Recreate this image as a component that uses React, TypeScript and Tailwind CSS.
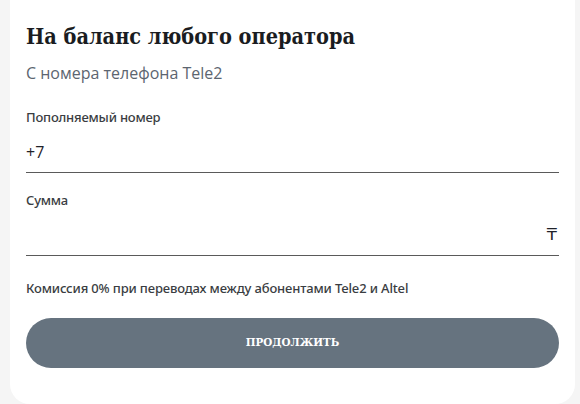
export default function App() {
  return (
    <div className="min-h-[404px] bg-[#f5f5f5] pl-[10px] pr-[5px] font-['Open_Sans',sans-serif]">
      <div className="h-[404px] rounded-b-[20px] bg-white px-4 pt-[20px]">
        <h1 className="font-['DejaVu_Serif_Condensed','DejaVu_Serif',serif] text-[21.5px] font-bold leading-[34px] text-[#1a1c21] [font-stretch:condensed]">
          На баланс любого оператора
        </h1>
        <p className="mt-[8px] text-[16px] leading-[22px] text-[#5c6570]">С номера телефона Tele2</p>

        <div className="mt-[24px]">
          <label className="block font-['Noto_Sans',sans-serif] text-[13px] font-medium leading-[18px] tracking-[-0.2px] text-[#3a3d42]">
            Пополняемый номер
          </label>
          <div className="flex h-[47px] items-end border-b border-[#5a5a5a] pb-[9px] text-[16px] leading-[22px] text-[#1f2229]">
            +7
          </div>
        </div>

        <div className="mt-[18px]">
          <label className="block font-['Noto_Sans',sans-serif] text-[13px] font-medium leading-[18px] tracking-[-0.2px] text-[#3a3d42]">
            Сумма
          </label>
          <div className="flex h-[47px] items-end justify-end border-b border-[#5a5a5a] pb-[9px] pr-[2px] font-['DejaVu_Sans',sans-serif] text-[16px] leading-[22px] text-[#1f2229]">
            ₸
          </div>
        </div>

        <p className="mt-[23px] font-['Noto_Sans',sans-serif] text-[13px] font-medium leading-[18px] tracking-[-0.15px] text-[#3a3d42]">
          Комиссия 0% при переводах между абонентами Tele2 и Altel
        </p>

        <button className="mt-[21px] flex h-[50px] w-full items-center justify-center rounded-full bg-[#66737f] font-['DejaVu_Serif_Condensed','DejaVu_Serif',serif] text-[11.5px] font-bold uppercase text-white [font-stretch:condensed]">
          Продолжить
        </button>
      </div>
    </div>
  )
}
